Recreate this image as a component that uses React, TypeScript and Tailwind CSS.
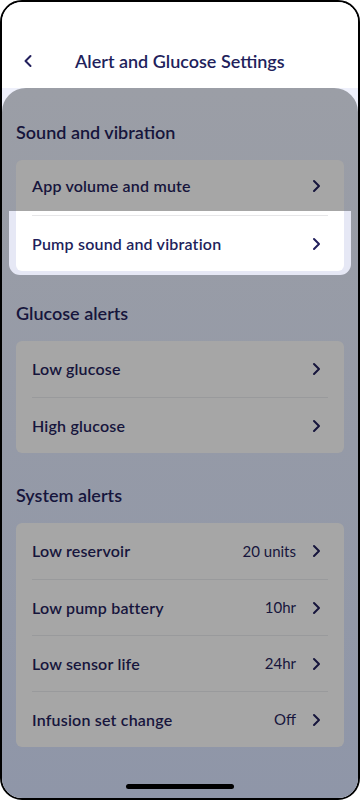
import React from "react";

const navy = "text-[#221f5c]";
const dim = "text-[#16153c]";

function Chevron({ dir = "right", className = "" }: { dir?: "left" | "right"; className?: string }) {
  return (
    <svg viewBox="0 0 24 24" className={`w-6 h-6 shrink-0 ${className}`} fill="none">
      <path
        d={dir === "right" ? "M10 7l5 5-5 5" : "M14.5 7l-5 5 5 5"}
        stroke="currentColor"
        strokeWidth={2}
        strokeLinecap="round"
        strokeLinejoin="round"
      />
    </svg>
  );
}

type Item = { label: string; value?: string };

function Row({ item, first, light }: { item: Item; first?: boolean; light?: boolean }) {
  return (
    <div
      className={`mx-4 h-14 flex items-center ${first ? "" : light ? "border-t border-[#e6e6e8]" : "border-t border-[#999a9c]"}`}
    >
      <span className={`flex-1 text-[16px] tracking-[0.012em] font-semibold ${light ? navy : dim}`}>{item.label}</span>
      {item.value && (
        <span className={`text-[15px] mr-2 ${light ? navy : dim}`}>{item.value}</span>
      )}
      <Chevron className={light ? navy : dim} />
    </div>
  );
}

function Heading({ children }: { children: React.ReactNode }) {
  return <h2 className={`text-[18px] leading-6 font-semibold ${dim}`}>{children}</h2>;
}

const glucose: Item[] = [{ label: "Low glucose" }, { label: "High glucose" }];
const system: Item[] = [
  { label: "Low reservoir", value: "20 units" },
  { label: "Low pump battery", value: "10hr" },
  { label: "Low sensor life", value: "24hr" },
  { label: "Infusion set change", value: "Off" },
];

export default function App() {
  return (
    <div className="w-[360px] h-[800px] bg-white" style={{ fontFamily: "Lato, 'Noto Sans', sans-serif" }}>
      <div className="h-full border-2 border-black rounded-[22px] overflow-hidden flex flex-col bg-[#eef0fb]">
        {/* Header */}
        <header className="bg-white h-[86px] shrink-0 flex items-center pt-[32px] pl-[14px]">
          <Chevron dir="left" className={navy} />
          <h1 className={`ml-[35px] text-[18px] font-semibold ${navy}`}>Alert and Glucose Settings</h1>
        </header>

        {/* Dimmed sheet */}
        <main className="flex-1 rounded-t-[24px] bg-gradient-to-b from-[#9b9ea6] to-[#8f96a8] flex flex-col px-[14px] pt-[32px]">
          <Heading>Sound and vibration</Heading>
          <div className="mt-4 mb-[26px]">
            <div className="bg-[#a6a6a6] rounded-t-md">
              <div className="mx-4 h-[51px] flex items-center">
                <span className={`flex-1 text-[16px] tracking-[0.012em] font-semibold ${dim}`}>App volume and mute</span>
                <Chevron className={dim} />
              </div>
            </div>
            <div className="-mx-[7px] px-[7px] pb-[4px] bg-[#e6e8f5] rounded-b-[11px]">
              <div className="bg-white rounded-b-md pt-1">
                <Row item={{ label: "Pump sound and vibration" }} light />
              </div>
            </div>
          </div>

          <Heading>Glucose alerts</Heading>
          <div className="mt-4 mb-[30px] bg-[#a6a6a6] rounded-md">
            {glucose.map((it, i) => (
              <Row key={it.label} item={it} first={i === 0} />
            ))}
          </div>

          <Heading>System alerts</Heading>
          <div className="mt-4 bg-[#a6a6a6] rounded-md">
            {system.map((it, i) => (
              <Row key={it.label} item={it} first={i === 0} />
            ))}
          </div>

          <div className="mt-auto mb-[9px] self-center w-[108px] h-[5px] rounded-full bg-black" />
        </main>
      </div>
    </div>
  );
}
